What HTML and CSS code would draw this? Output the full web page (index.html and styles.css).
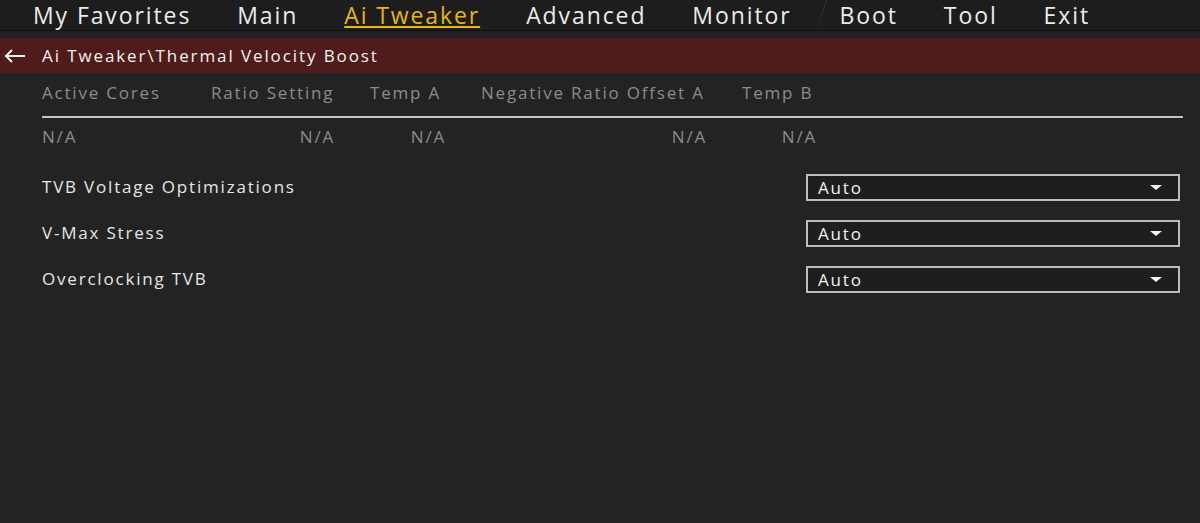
FILE: index.html
```html
<!doctype html>
<html lang="en">
 <head>
  <meta charset="utf-8">
  <title>Ai Tweaker - Thermal Velocity Boost</title>
  <link rel="stylesheet" href="styles.css">
 </head>
 <body>
  <div class="bios">
   <nav class="menu">
    <span class="menu-item">My Favorites</span>
    <span class="menu-item">Main</span>
    <span class="menu-item active">Ai Tweaker</span>
    <span class="menu-item">Advanced</span>
    <span class="menu-item">Monitor</span>
    <span class="menu-slash"></span>
    <span class="menu-item">Boot</span>
    <span class="menu-item">Tool</span>
    <span class="menu-item">Exit</span>
   </nav>
   <div class="menu-gap"></div>
   <div class="path-bar">
    <svg class="back" width="22" height="14" viewBox="0 0 22 14">
     <path d="M21 7 H2 M8 1 L2 7 L8 13" fill="none" stroke="#f0f0f0" stroke-width="2"/>
    </svg>
    <span>Ai Tweaker\Thermal Velocity Boost</span>
   </div>

   <div class="content">
    <div class="tvb-grid tvb-head">
     <span>Active Cores</span>
     <span>Ratio Setting</span>
     <span>Temp A</span>
     <span>Negative Ratio Offset A</span>
     <span>Temp B</span>
    </div>
    <div class="tvb-grid tvb-values">
     <span class="first">N/A</span>
     <span>N/A</span>
     <span>N/A</span>
     <span>N/A</span>
     <span>N/A</span>
    </div>

    <div class="settings">
     <div class="setting">
      <span class="label">TVB Voltage Optimizations</span>
      <div class="select"><span>Auto</span><i class="caret"></i></div>
     </div>
     <div class="setting">
      <span class="label">V-Max Stress</span>
      <div class="select"><span>Auto</span><i class="caret"></i></div>
     </div>
     <div class="setting">
      <span class="label">Overclocking TVB</span>
      <div class="select"><span>Auto</span><i class="caret"></i></div>
     </div>
    </div>
   </div>
  </div>
 </body>
</html>
```

FILE: styles.css
```css
body {
	margin: 0;
	padding: 0;
	background-color: #232323;
	font-family: "Open Sans", "Noto Sans", sans-serif;
}

.bios {
	width: 1200px;
	height: 523px;
	overflow: hidden;
	background-color: #232323;
}

/* top menu */
.menu {
	display: flex;
	align-items: flex-start;
	height: 30px;
	padding-left: 33px;
	background-color: #1d1d1d;
	border-bottom: 1px solid #111;
}

.menu-item {
	font-size: 23px;
	line-height: 31px;
	color: #ebebeb;
	letter-spacing: 1.9px;
	margin-right: 46px;
	white-space: nowrap;
}

.menu-item.active {
	color: #e8b418;
	text-decoration: underline;
	text-decoration-thickness: 2px;
	text-underline-offset: 2px;
}

.menu-slash {
	width: 1px;
	height: 26px;
	margin: 0 17px 0 -16px;
	background: linear-gradient(to bottom, rgba(255,255,255,0.12), rgba(255,255,255,0.02));
	transform: skewX(-18deg);
}

.menu-gap {
	height: 7px;
	background-color: #1f2020;
}

/* breadcrumb */
.path-bar {
	display: flex;
	align-items: center;
	height: 35px;
	padding-left: 4px;
	background-color: #4f1b1b;
	color: #f2f2f2;
	font-size: 17px;
	letter-spacing: 1.9px;
}

.path-bar .back {
	margin-right: 16px;
}

.content {
	padding: 0 17px 0 42px;
}

/* TVB table */
.tvb-grid {
	display: grid;
	grid-template-columns: 132px 122px 74px 224px 73px;
	column-gap: 37px;
	font-size: 17px;
	line-height: 22px;
	color: #8c8c8c;
	letter-spacing: 1.8px;
}

.tvb-head {
	padding: 9px 0 12px;
	border-bottom: 2px solid #c4c4c4;
}

.tvb-head span {
	white-space: nowrap;
}

.tvb-values {
	padding-top: 8px;
}

.tvb-values span {
	text-align: right;
	margin-right: -2px;
}

.tvb-values span.first {
	text-align: left;
}

/* settings rows */
.settings {
	display: flex;
	flex-direction: column;
	gap: 19px;
	margin-top: 26px;
	padding-right: 3px;
}

.setting {
	display: flex;
	justify-content: space-between;
	align-items: center;
	height: 27px;
	color: #e6e6e6;
	font-size: 17px;
	letter-spacing: 1.8px;
}

.setting .label {
	margin-top: -3px;
}

.select {
	display: flex;
	align-items: center;
	justify-content: space-between;
	box-sizing: border-box;
	width: 374px;
	height: 27px;
	padding: 0 16px 0 10px;
	border: 2px solid #bcbcbc;
	background-color: #1e1e1e;
	color: #f2f2f2;
}

.caret {
	width: 0;
	height: 0;
	border-left: 6px solid transparent;
	border-right: 6px solid transparent;
	border-top: 5px solid #f2f2f2;
}
```
